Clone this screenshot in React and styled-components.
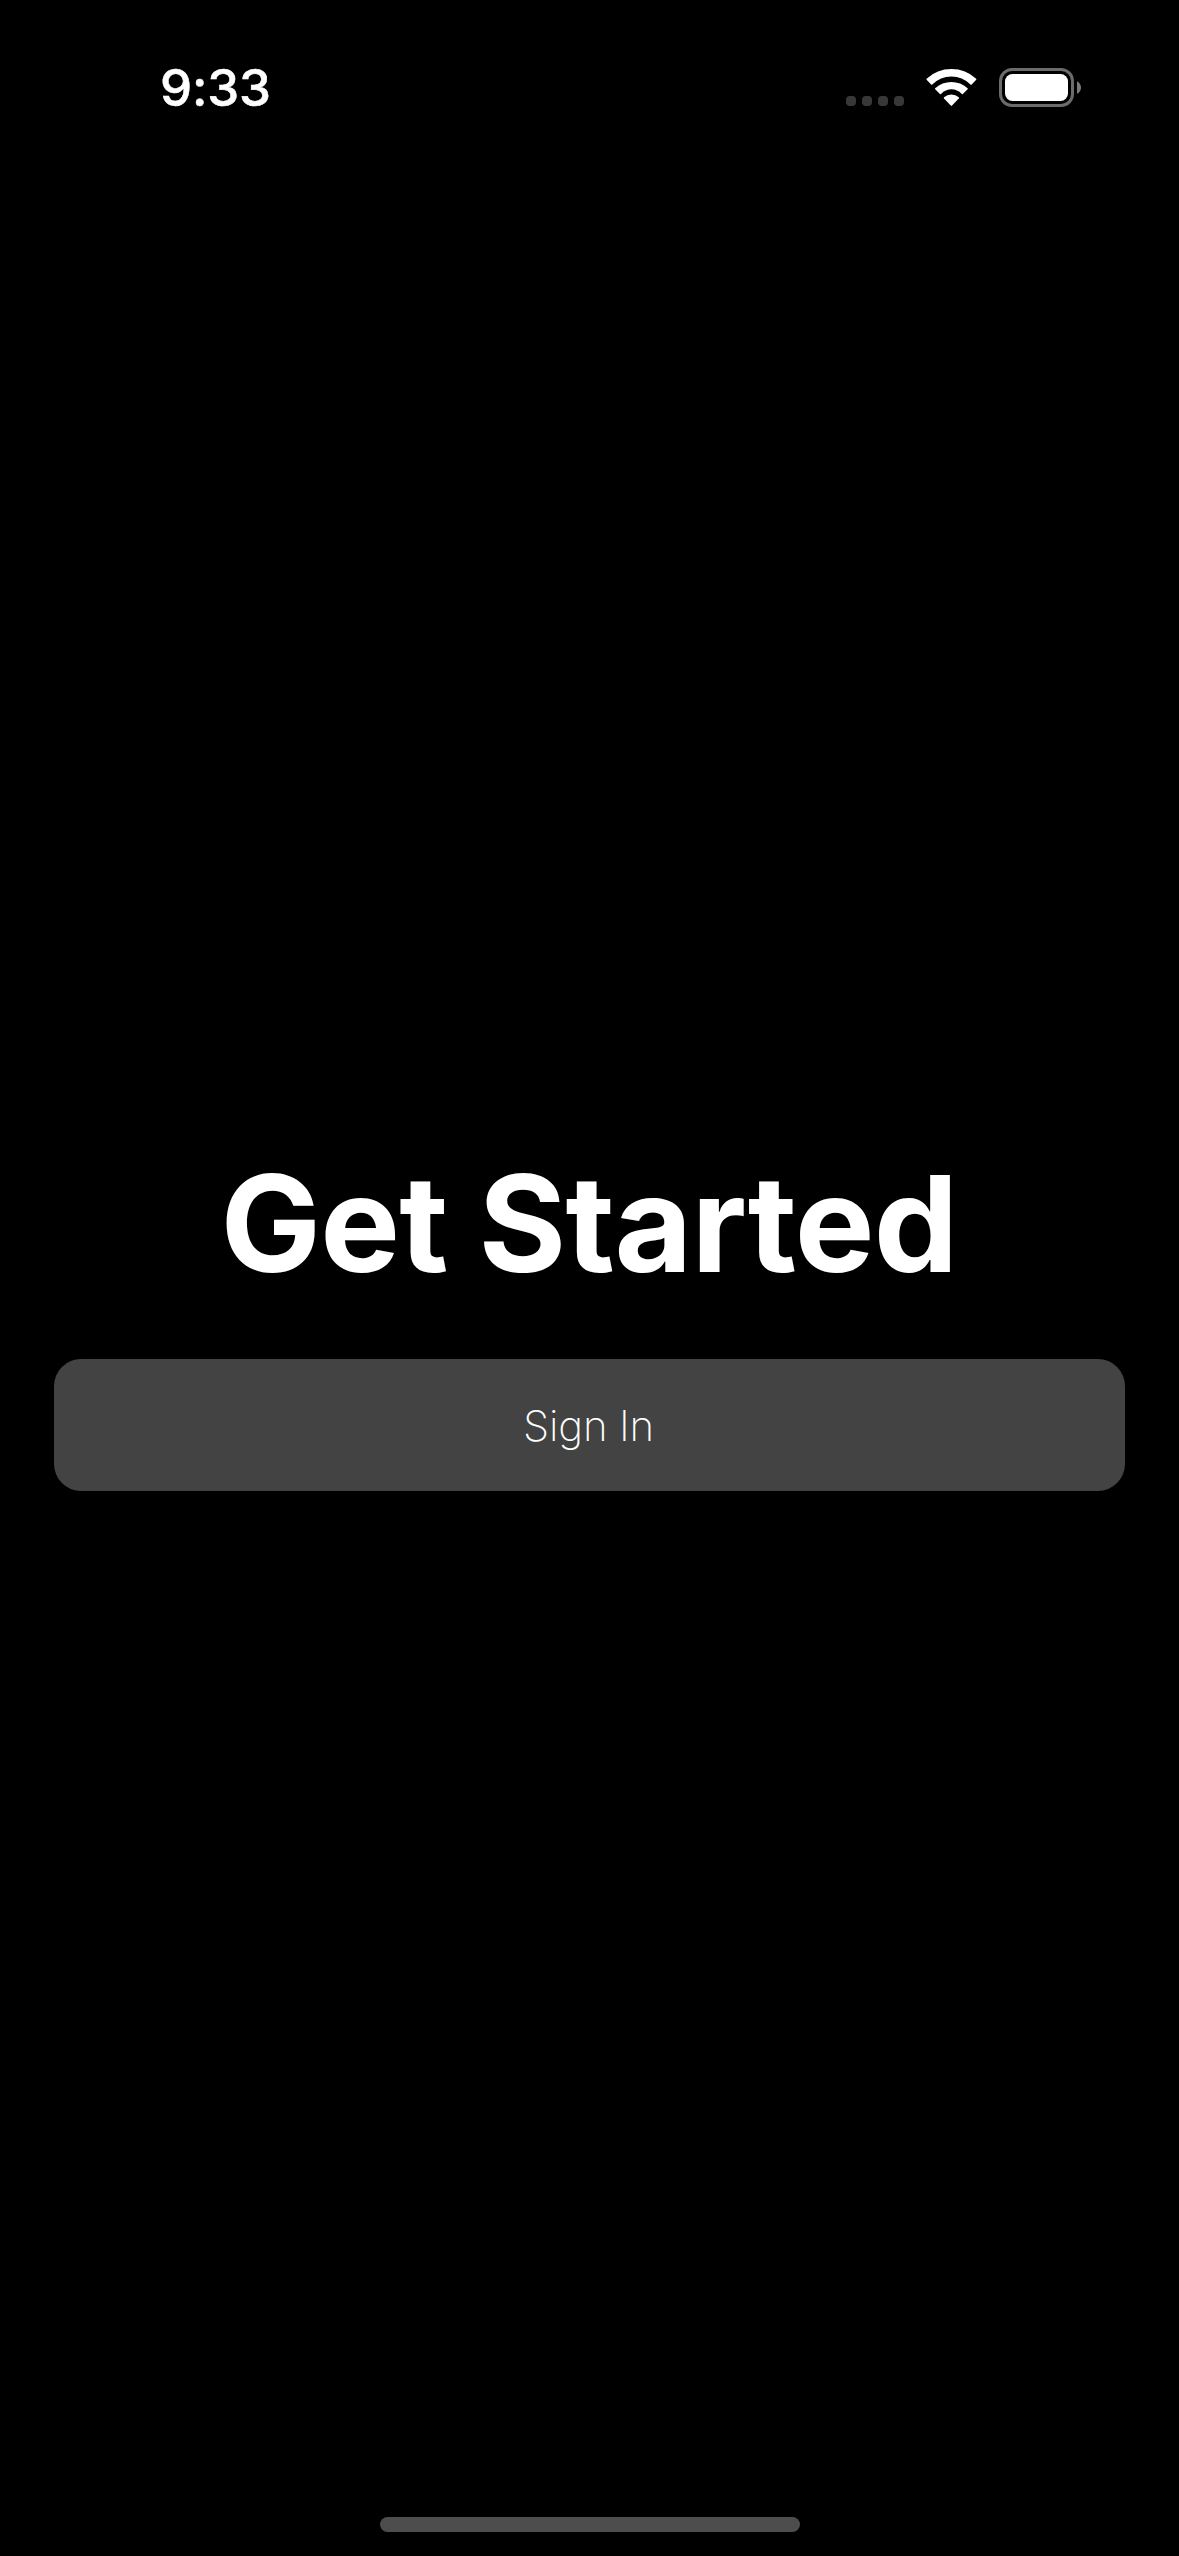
import React from "react";
import styled, { createGlobalStyle } from "styled-components";

const GlobalStyle = createGlobalStyle`
  *, *::before, *::after { box-sizing: border-box; }
  html, body { margin: 0; padding: 0; background: #000; }
`;

const Screen = styled.div`
  display: flex;
  flex-direction: column;
  width: 1179px;
  height: 2556px;
  overflow: hidden;
  background: #000;
  color: #fff;
  font-family: Inter, "Liberation Sans", sans-serif;
`;

const StatusBar = styled.header`
  display: flex;
  justify-content: space-between;
  align-items: flex-start;
  height: 177px;
  padding: 58px 97px 0 160px;
`;

const Time = styled.span`
  font-size: 51px;
  line-height: 60px;
  font-weight: 500;
  letter-spacing: -0.2px;
  -webkit-text-stroke: 0.5px #fff;
`;

const Indicators = styled.div`
  display: flex;
  padding-top: 10px;
`;

const SignalDots = styled.div`
  display: flex;
  gap: 6px;
  padding-top: 28px;
  margin-right: 21px;
`;

const SignalDot = styled.i`
  width: 10px;
  height: 10px;
  border-radius: 4px;
  background: #383838;
`;

const WifiIcon = styled.svg`
  width: 52px;
  height: 39px;
  margin-right: 22px;
`;

const BatteryIcon = styled.svg`
  width: 83px;
  height: 40px;
`;

const Main = styled.main`
  display: flex;
  flex: 1;
  flex-direction: column;
  align-items: stretch;
  padding: 965px 54px 0;
`;

const Title = styled.h1`
  margin: 0;
  padding-right: 1px;
  font-size: 134px;
  line-height: 162px;
  font-weight: 700;
  letter-spacing: -0.8px;
  text-align: center;
  white-space: nowrap;
`;

const SignInButton = styled.button`
  display: flex;
  align-items: center;
  justify-content: center;
  height: 132px;
  margin-top: 55px;
  padding: 0 2px 0 0;
  border: 0;
  border-radius: 27px;
  background: #434343;
  color: #fff;
  font-family: inherit;
  font-size: 42px;
  font-weight: 200;
  letter-spacing: -0.2px;
  will-change: opacity;
`;

const HomeArea = styled.footer`
  display: flex;
  justify-content: center;
  height: 39px;
`;

const HomeIndicator = styled.div`
  width: 420px;
  height: 15px;
  margin-left: 1px;
  border-radius: 8px;
  background: #4d4d4d;
`;

function Wifi() {
  return (
    <WifiIcon viewBox="0 0 52 39" fill="#fff" aria-label="Wi-Fi">
      <path d="M26.4 1 Q40.8 1 51.2 10.7 Q51.7 11.2 51.2 11.8 L46.7 16.4 Q46.1 17 45.5 16.4 Q37.4 8.4 26.4 8.4 Q15.4 8.4 7.3 16.4 Q6.7 17 6.1 16.4 L1.6 11.8 Q1.1 11.2 1.6 10.7 Q12 1 26.4 1Z" />
      <path d="M26.4 13.9 Q35.6 13.9 42.6 20.2 Q43.1 20.7 42.6 21.2 L37.9 25.9 Q37.4 26.4 36.8 25.9 Q32.3 21.3 26.4 21.3 Q20.5 21.3 16 25.9 Q15.4 26.4 14.9 25.9 L10.2 21.2 Q9.7 20.7 10.2 20.2 Q17.2 13.9 26.4 13.9Z" />
      <path d="M26.4 26.5 Q30.6 26.5 33.8 29.3 Q34.3 29.8 33.8 30.4 L27 37.6 Q26.4 38.2 25.8 37.6 L19 30.4 Q18.5 29.8 19 29.3 Q22.2 26.5 26.4 26.5Z" />
    </WifiIcon>
  );
}

function Battery() {
  return (
    <BatteryIcon viewBox="0 0 83 40" aria-label="Battery">
      <rect x="1.5" y="1.5" width="72" height="36" rx="11.5" fill="none" stroke="#6b6b6b" strokeWidth="3" />
      <rect x="6" y="6" width="63" height="27" rx="7.5" fill="#fff" />
      <path d="M78 13.2 C80.6 14.5 82 16.9 82 19.5 C82 22.1 80.6 24.5 78 25.8Z" fill="#7a7a7a" />
    </BatteryIcon>
  );
}

export default function App() {
  return (
    <>
      <GlobalStyle />
      <Screen>
        <StatusBar>
          <Time>9:33</Time>
          <Indicators>
            <SignalDots>
              {[0, 1, 2, 3].map((n) => (
                <SignalDot key={n} />
              ))}
            </SignalDots>
            <Wifi />
            <Battery />
          </Indicators>
        </StatusBar>
        <Main>
          <Title>Get Started</Title>
          <SignInButton type="button">Sign In</SignInButton>
        </Main>
        <HomeArea>
          <HomeIndicator />
        </HomeArea>
      </Screen>
    </>
  );
}
